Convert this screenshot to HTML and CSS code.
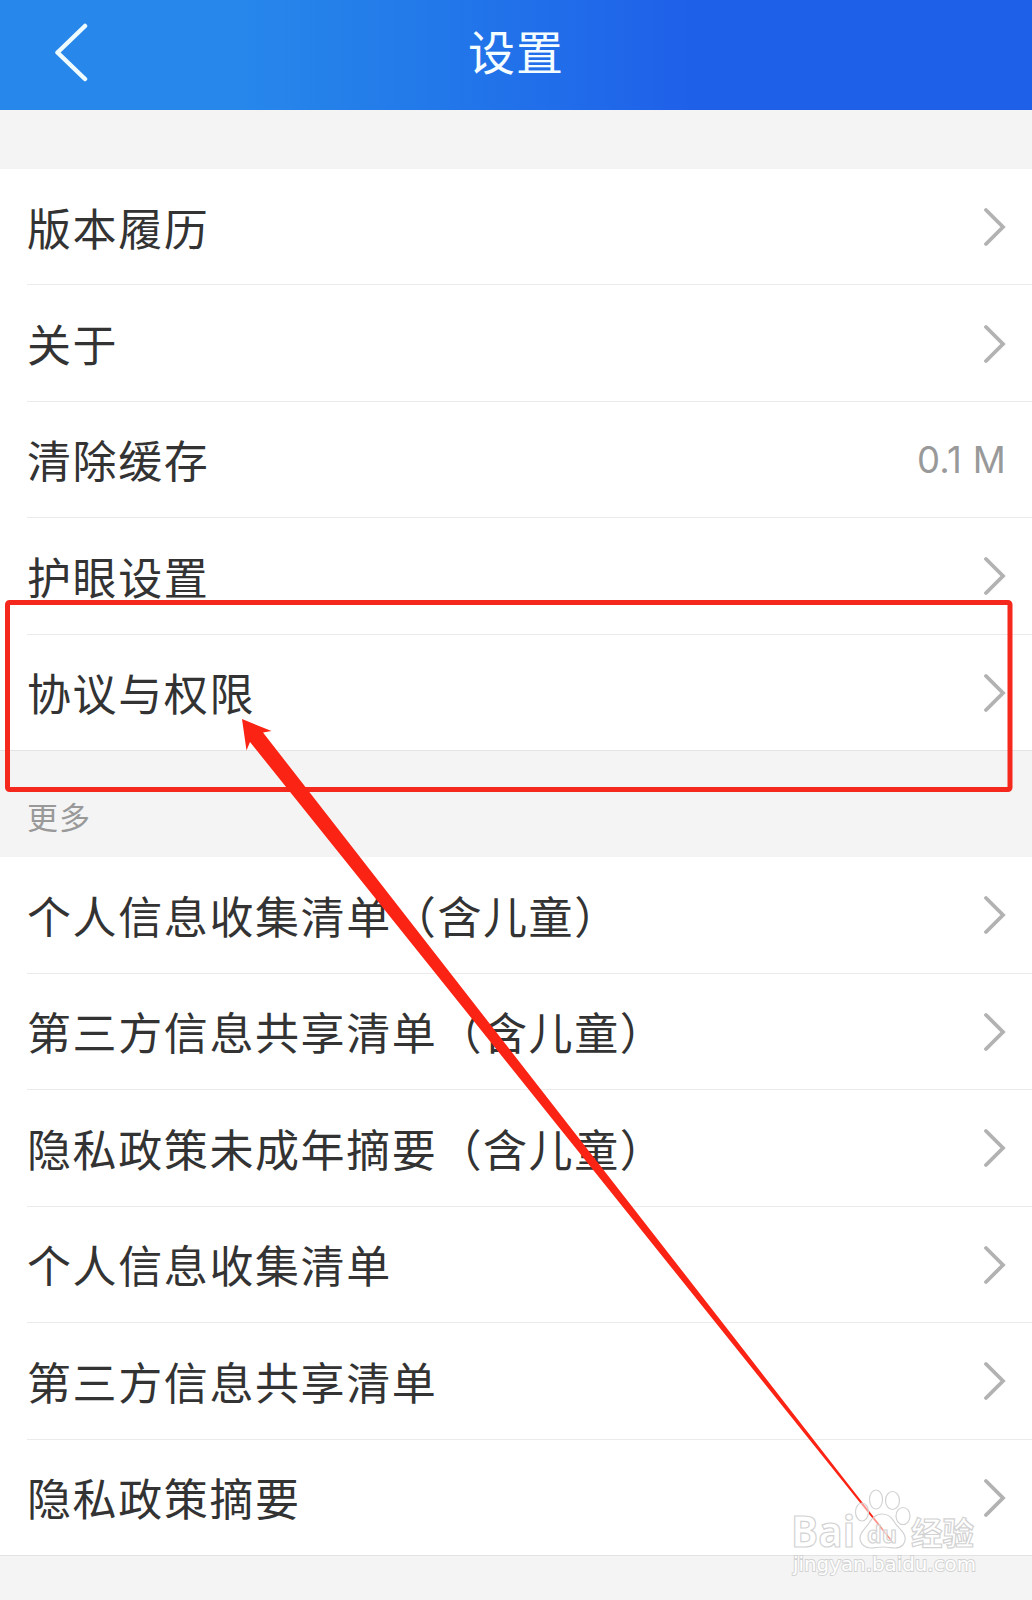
FILE: index.html
```html
<!DOCTYPE html>
<html lang="zh-CN">
<head>
<meta charset="utf-8">
<title>设置</title>
<link rel="stylesheet" href="styles.css">
</head>
<body>
<svg class="defs" width="0" height="0"><symbol id="chevron" viewBox="0 0 22 40"><path d="M2 3 19 20 2 37"/></symbol></svg>
<main class="screen">
  <header class="topbar">
    <svg class="back" viewBox="0 0 34 60"><path d="M31 4 3.500 30.500 31 57"/></svg>
    <h1 class="title">设置</h1>
  </header>
  <ul class="group group-first">
    <li class="row"><span class="label">版本履历</span><svg class="chevron"><use href="#chevron"/></svg></li>
    <li class="row"><span class="label">关于</span><svg class="chevron"><use href="#chevron"/></svg></li>
    <li class="row"><span class="label">清除缓存</span><span class="value">0.1 M</span></li>
    <li class="row"><span class="label">护眼设置</span><svg class="chevron"><use href="#chevron"/></svg></li>
    <li class="row"><span class="label">协议与权限</span><svg class="chevron"><use href="#chevron"/></svg></li>
  </ul>
  <h2 class="section">更多</h2>
  <ul class="group">
    <li class="row"><span class="label">个人信息收集清单（含儿童）</span><svg class="chevron"><use href="#chevron"/></svg></li>
    <li class="row"><span class="label">第三方信息共享清单（含儿童）</span><svg class="chevron"><use href="#chevron"/></svg></li>
    <li class="row"><span class="label">隐私政策未成年摘要（含儿童）</span><svg class="chevron"><use href="#chevron"/></svg></li>
    <li class="row"><span class="label">个人信息收集清单</span><svg class="chevron"><use href="#chevron"/></svg></li>
    <li class="row"><span class="label">第三方信息共享清单</span><svg class="chevron"><use href="#chevron"/></svg></li>
    <li class="row"><span class="label">隐私政策摘要</span><svg class="chevron"><use href="#chevron"/></svg></li>
  </ul>
  <svg class="overlay" viewBox="0 0 1032 1600">
    <rect class="highlight" x="7.500" y="602.500" width="1002.500" height="187" rx="2"/>
    <path class="arrow" d="M242 719 271.500 731 263 732.500 892.500 1541 891.500 1542 250 742 246.500 750.500Z"/>
    <g class="mark">
      <ellipse cx="862" cy="1512" rx="6.500" ry="9"/>
      <ellipse cx="876" cy="1499.500" rx="6.500" ry="9.500"/>
      <ellipse cx="892.500" cy="1500.500" rx="7" ry="9"/>
      <ellipse cx="903" cy="1516" rx="7" ry="8.500"/>
      <path d="M882 1514c-6 0-10 4-13 9-4 6-9 9-9 15 0 6 5 10 11 10 5 0 7-1 12-1s7 1 12 1c7 0 11-5 10-11-1-6-6-8-10-14-3-5-6-9-13-9Z"/>
      <text class="latin" x="791" y="1547" textLength="64" lengthAdjust="spacingAndGlyphs">Bai</text>
      <text class="du" x="867" y="1543" textLength="30" lengthAdjust="spacingAndGlyphs">du</text>
      <text class="cjk" x="911" y="1545" textLength="63" lengthAdjust="spacingAndGlyphs">经验</text>
      <text class="url" x="793" y="1571" textLength="183" lengthAdjust="spacingAndGlyphs">jingyan.baidu.com</text>
    </g>
  </svg>
</main>
</body>
</html>
```
FILE: styles.css
```css
* { box-sizing: border-box; }
body {
  margin: 0;
  background: #f4f4f4;
  color: #333;
  font-family: "Noto Sans CJK SC", sans-serif;
}
.defs { position: absolute; }
.screen {
  position: relative;
  width: 1032px;
  height: 1600px;
  overflow: hidden;
}
.topbar {
  display: grid;
  grid-template-columns: 1fr auto 1fr;
  align-items: center;
  height: 110px;
  padding: 0 54px 6px;
  background: linear-gradient(90deg, #2787eb 240px, #237be9 400px, #206bea 580px, #1f60e9 690px);
}
.back { width: 34px; height: 60px; }
.back path {
  fill: none;
  stroke: #effcff;
  stroke-width: 4.500;
  stroke-linecap: round;
  stroke-linejoin: round;
}
.title {
  margin: 0;
  padding-bottom: 4px;
  color: #f4fdff;
  font-size: 47px;
  line-height: 60px;
  font-weight: 400;
  letter-spacing: 1px;
}
.group {
  margin: 0;
  padding: 0;
  list-style: none;
  background: #fff;
  border-bottom: 1px solid #e3e3e3;
}
.group-first { margin-top: 59px; }
.row {
  display: flex;
  align-items: center;
  justify-content: space-between;
  height: 116.400px;
  margin-left: 27px;
  padding: 1px 26px 0 0;
  border-bottom: 1px solid #ebebeb;
  font-size: 44px;
  line-height: 60px;
  letter-spacing: 1.600px;
}
.row:last-child { height: 115.400px; border-bottom: 0; }
.section + .group .row { height: 116.550px; }
.section + .group .row:last-child { height: 115.500px; }
.label { padding-bottom: 1px; }
.chevron { width: 22px; height: 40px; }
#chevron path {
  fill: none;
  stroke: #b2b2b2;
  stroke-width: 3.800;
  stroke-linecap: round;
  stroke-linejoin: miter;
}
.value {
  color: #999;
  font-family: Inter, sans-serif;
  font-size: 36.500px;
  font-weight: 400;
  letter-spacing: .3px;
}
.section {
  height: 106px;
  margin: 0;
  padding: 43px 27px 0;
  color: #999;
  font-size: 31px;
  line-height: 44px;
  font-weight: 400;
  letter-spacing: 1px;
}
.overlay { position: absolute; inset: 0; width: 1032px; height: 1600px; }
.highlight { fill: none; stroke: #f5281d; stroke-width: 5; }
.arrow { fill: #fb2314; }
.mark {
  fill: rgba(255, 255, 255, .5);
  stroke: #d2d2d2;
  stroke-width: 1.200;
}
.latin { font: 700 43px "Open Sans", sans-serif; }
.du { font: 700 24px "Open Sans", sans-serif; }
.cjk { font: 700 32px "Noto Sans CJK SC", sans-serif; }
.url {
  font: 400 20px "DejaVu Sans", sans-serif;
  fill: #fff;
  stroke-width: 1.800;
  paint-order: stroke;
}
```
